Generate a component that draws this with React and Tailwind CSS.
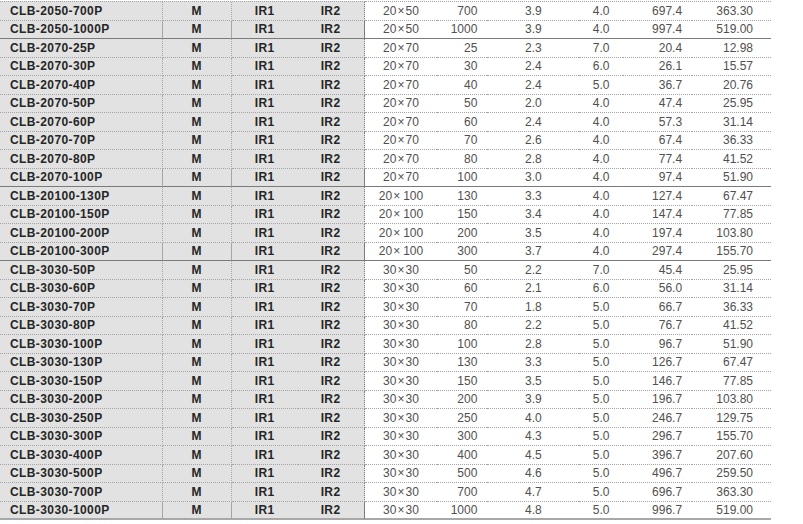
import React from "react";

const rows = [
  ["CLB-2050-700P", "20×50", "700", "3.9", "4.0", "697.4", "363.30", 0],
  ["CLB-2050-1000P", "20×50", "1000", "3.9", "4.0", "997.4", "519.00", 1],
  ["CLB-2070-25P", "20×70", "25", "2.3", "7.0", "20.4", "12.98", 0],
  ["CLB-2070-30P", "20×70", "30", "2.4", "6.0", "26.1", "15.57", 0],
  ["CLB-2070-40P", "20×70", "40", "2.4", "5.0", "36.7", "20.76", 0],
  ["CLB-2070-50P", "20×70", "50", "2.0", "4.0", "47.4", "25.95", 0],
  ["CLB-2070-60P", "20×70", "60", "2.4", "4.0", "57.3", "31.14", 0],
  ["CLB-2070-70P", "20×70", "70", "2.6", "4.0", "67.4", "36.33", 0],
  ["CLB-2070-80P", "20×70", "80", "2.8", "4.0", "77.4", "41.52", 0],
  ["CLB-2070-100P", "20×70", "100", "3.0", "4.0", "97.4", "51.90", 1],
  ["CLB-20100-130P", "20×100", "130", "3.3", "4.0", "127.4", "67.47", 0],
  ["CLB-20100-150P", "20×100", "150", "3.4", "4.0", "147.4", "77.85", 0],
  ["CLB-20100-200P", "20×100", "200", "3.5", "4.0", "197.4", "103.80", 0],
  ["CLB-20100-300P", "20×100", "300", "3.7", "4.0", "297.4", "155.70", 1],
  ["CLB-3030-50P", "30×30", "50", "2.2", "7.0", "45.4", "25.95", 0],
  ["CLB-3030-60P", "30×30", "60", "2.1", "6.0", "56.0", "31.14", 0],
  ["CLB-3030-70P", "30×30", "70", "1.8", "5.0", "66.7", "36.33", 0],
  ["CLB-3030-80P", "30×30", "80", "2.2", "5.0", "76.7", "41.52", 0],
  ["CLB-3030-100P", "30×30", "100", "2.8", "5.0", "96.7", "51.90", 0],
  ["CLB-3030-130P", "30×30", "130", "3.3", "5.0", "126.7", "67.47", 0],
  ["CLB-3030-150P", "30×30", "150", "3.5", "5.0", "146.7", "77.85", 0],
  ["CLB-3030-200P", "30×30", "200", "3.9", "5.0", "196.7", "103.80", 0],
  ["CLB-3030-250P", "30×30", "250", "4.0", "5.0", "246.7", "129.75", 0],
  ["CLB-3030-300P", "30×30", "300", "4.3", "5.0", "296.7", "155.70", 0],
  ["CLB-3030-400P", "30×30", "400", "4.5", "5.0", "396.7", "207.60", 0],
  ["CLB-3030-500P", "30×30", "500", "4.6", "5.0", "496.7", "259.50", 0],
  ["CLB-3030-700P", "30×30", "700", "4.7", "5.0", "696.7", "363.30", 0],
  ["CLB-3030-1000P", "30×30", "1000", "4.8", "5.0", "996.7", "519.00", 2],
];

function Size({ s }) {
  const [a, b] = s.split("×");
  return (
    <span>
      {a}
      <span className="mx-[1px]">×</span>
      {b.length > 2 ? <span className="ml-[2px]">{b}</span> : b}
    </span>
  );
}

function Row({ r }) {
  const [name, size, len, a, b, c, d, kind] = r;
  const bb =
    kind === 1
      ? "border-b border-solid border-b-[#7a7a7a]"
      : kind === 2
      ? "border-b-2 border-solid border-b-[#a8a8a8]"
      : "border-b border-dotted border-b-[#a4a4a4]";
  const h = "h-[18.5px] flex items-center";
  const g = `${h} ${bb} bg-[#e2e2e2] font-bold text-[12px] tracking-[0.4px] text-[#262626]`;
  const w = `${h} ${bb} bg-white text-[12px] text-[#505050]`;
  return (
    <div className="flex w-[771px]">
      <div className={`${g} w-[163px] pl-[10px] border-r border-r-[#a6a6a6]`}>{name}</div>
      <div className={`${g} w-[69px] justify-center border-r border-r-[#a6a6a6]`}>M</div>
      <div className={`${g} w-[66px] justify-center`}>IR1</div>
      <div className={`${g} w-[67px] justify-center border-r border-r-[#7c7c7c]`}>IR2</div>
      <div className={`${w} w-[73px] justify-center`}>
        <Size s={size} />
      </div>
      <div className={`${w} w-[50px] justify-end pr-[10px]`}>{len}</div>
      <div className={`${w} w-[92px] justify-center`}>{a}</div>
      <div className={`${w} w-[44px] justify-center`}>{b}</div>
      <div className={`${w} w-[69px] justify-end pr-[10px]`}>{c}</div>
      <div className={`${w} w-[79px] justify-end pr-[18px]`}>{d}</div>
    </div>
  );
}

export default function App() {
  return (
    <div
      className="w-[803px] h-[524px] overflow-hidden bg-white pt-[1px]"
      style={{ fontFamily: '"Liberation Sans", Arial, sans-serif' }}
    >
      <div className="flex w-[771px] h-[1px]">
        <div className="w-[365px] bg-[#e2e2e2] border-t border-dotted border-t-[#a4a4a4]" />
        <div className="flex-1 border-t border-dotted border-t-[#a4a4a4]" />
      </div>
      {rows.map((r, i) => (
        <Row key={i} r={r} />
      ))}
    </div>
  );
}
